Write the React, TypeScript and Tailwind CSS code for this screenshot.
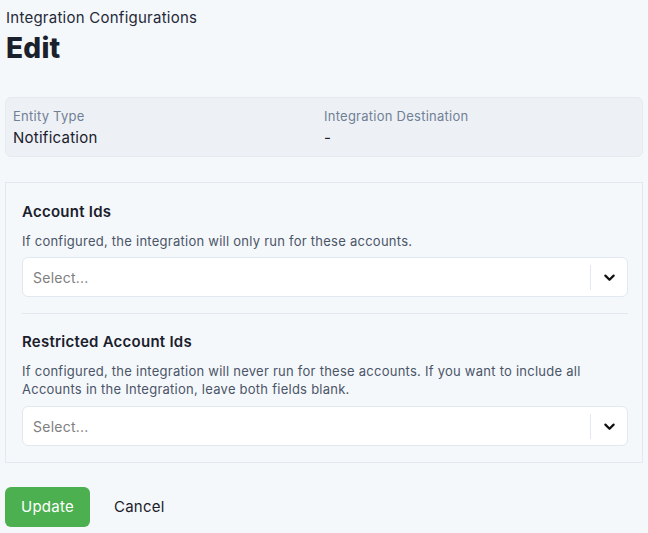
import React from "react";

function Chevron() {
  return (
    <svg width="15" height="15" viewBox="0 0 20 20" aria-hidden="true">
      <path
        d="M4.5 7.5 L10 13 L15.5 7.5"
        fill="none"
        stroke="#111111"
        strokeWidth="3"
        strokeLinecap="round"
        strokeLinejoin="round"
      />
    </svg>
  );
}

function SelectBox() {
  return (
    <div className="flex h-[40px] w-full items-center rounded-[6px] border border-[#e2e8f0] bg-white">
      <div className="flex-1 pl-[10px] text-[14px] text-[#808080]">Select...</div>
      <div className="h-[25px] w-px bg-[#e2e8f0]" />
      <div className="flex w-[36px] items-center justify-center">
        <Chevron />
      </div>
    </div>
  );
}

export default function App() {
  return (
    <div
      className="min-h-[533px] bg-[#f5f8fb] px-[5px] pt-[8px] tracking-[0.25px] text-[#1a202c]"
      style={{ fontFamily: "Inter, 'Noto Sans', sans-serif" }}
    >
      <div className="pl-px text-[15px] leading-[20px] text-[#1f2937]">Integration Configurations</div>
      <h1 className="mt-[2px] pl-px text-[28px] font-extrabold leading-[36px] text-[#1a202c]">Edit</h1>

      <div className="mt-[31px] grid grid-cols-2 rounded-[6px] border border-[#e6ebf1] bg-[#edf1f5] px-[7px] pb-[7px] pt-[8px]">
        <div>
          <div className="text-[13px] leading-[20px] text-[#718096]">Entity Type</div>
          <div className="mt-[1px] text-[15px] leading-[22px] text-[#1a202c]">Notification</div>
        </div>
        <div>
          <div className="text-[13px] leading-[20px] text-[#718096]">Integration Destination</div>
          <div className="mt-[1px] text-[15px] leading-[22px] text-[#1a202c]">-</div>
        </div>
      </div>

      <div className="mt-[25px] border border-[#e2e8f0] pb-[16px] pl-[16px] pr-[14px] pt-[18px]">
        <div className="text-[15px] font-semibold leading-[22px] text-[#1a202c]">Account Ids</div>
        <div className="mt-[9px] text-[13px] leading-[18px] text-[#4a5568]">
          If configured, the integration will only run for these accounts.
        </div>
        <div className="mt-[7px]">
          <SelectBox />
        </div>
        <div className="mt-[16px] h-px bg-[#e2e8f0]" />
        <div className="mt-[17px] text-[15px] font-semibold leading-[22px] text-[#1a202c]">
          Restricted Account Ids
        </div>
        <div className="mt-[9px] text-[13px] leading-[18px] text-[#4a5568]">
          If configured, the integration will never run for these accounts. If you want to include all Accounts in the
          Integration, leave both fields blank.
        </div>
        <div className="mt-[8px]">
          <SelectBox />
        </div>
      </div>

      <div className="mt-[24px] flex items-center gap-[8px]">
        <button className="h-[40px] rounded-[6px] bg-[#4caf50] px-[16px] text-[15px] text-white">Update</button>
        <button className="h-[40px] px-[16px] text-[15px] text-[#1a202c]">Cancel</button>
      </div>
    </div>
  );
}
